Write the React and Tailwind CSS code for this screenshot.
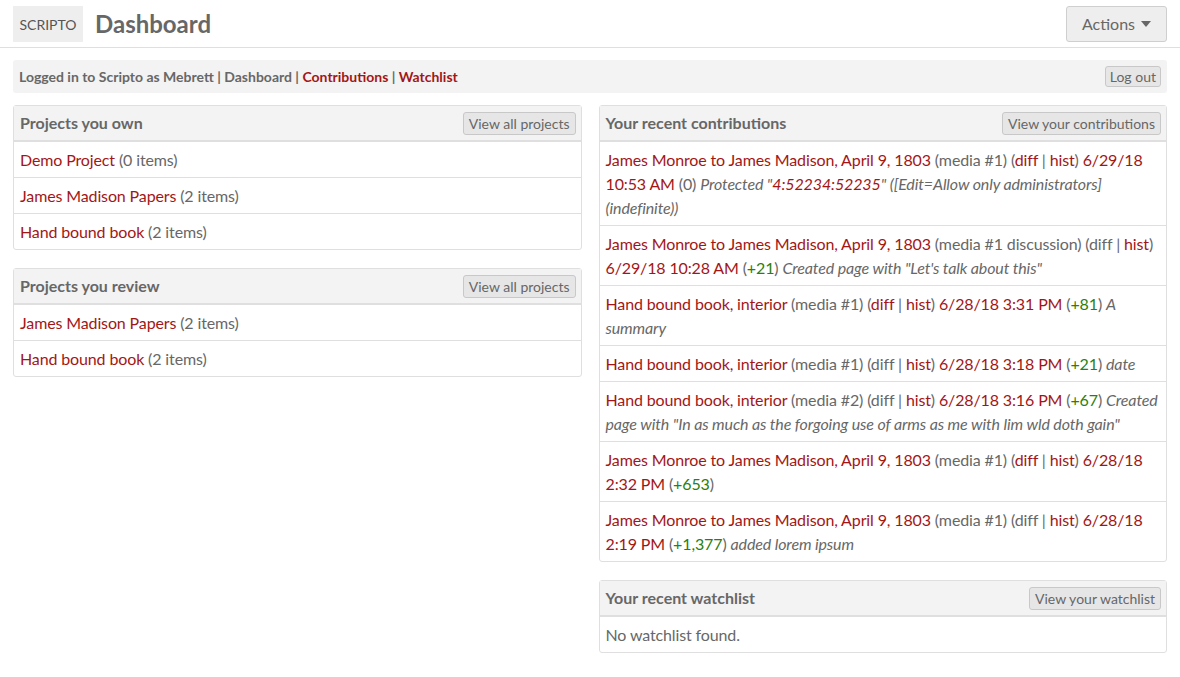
const L = ({ children }) => <a href="#" className="text-[#a31616]">{children}</a>;
const G = ({ children }) => <span className="text-[#2a800a]">{children}</span>;

const Btn = ({ children }) => (
  <button className="h-[23px] px-[5px] text-[14px] leading-[21px] tracking-normal text-[#676767] bg-[#e6e6e6] border border-[#c8c8c8] rounded-[3px]">
    {children}
  </button>
);

const Panel = ({ title, action, children, className = '' }) => (
  <div className={`border border-[#dfdfdf] rounded-[3px] bg-white ${className}`}>
    <div className="h-[35px] flex items-center justify-between pl-[6px] pr-[5px] bg-[#f3f3f3] border-b border-[#dfdfdf]">
      <h3 className="text-[16px] font-bold text-[#676767] tracking-normal">{title}</h3>
      {action && <Btn>{action}</Btn>}
    </div>
    {children}
  </div>
);

const Row = ({ children }) => (
  <div className="px-[6px] pt-[6px] pb-[5px] leading-[24px] border-t border-[#dfdfdf] first:border-t-0 first:pb-[6px]">{children}</div>
);

const Diff = ({ link }) => (
  <>
    (<span className={link ? 'text-[#a31616]' : ''}>diff</span> | <L>hist</L>)
  </>
);

const contributions = [
  <>
    <L>James Monroe to James Madison, April 9, 1803</L> (media #1) <Diff link /> <L>6/29/18 10:53 AM</L> (0){' '}
    <i>Protected "<L>4:52234:52235</L>" ([Edit=Allow only administrators] (indefinite))</i>
  </>,
  <>
    <L>James Monroe to James Madison, April 9, 1803</L> (media #1 discussion) <Diff /> <L>6/29/18 10:28 AM</L> (<G>+21</G>){' '}
    <i>Created page with "Let's talk about this"</i>
  </>,
  <>
    <L>Hand bound book, interior</L> (media #1) <Diff link /> <L>6/28/18 3:31 PM</L> (<G>+81</G>) <i>A summary</i>
  </>,
  <>
    <L>Hand bound book, interior</L> (media #1) <Diff /> <L>6/28/18 3:18 PM</L> (<G>+21</G>) <i>date</i>
  </>,
  <>
    <L>Hand bound book, interior</L> (media #2) <Diff /> <L>6/28/18 3:16 PM</L> (<G>+67</G>){' '}
    <i>Created page with "In as much as the forgoing use of arms as me with lim wld doth gain"</i>
  </>,
  <>
    <L>James Monroe to James Madison, April 9, 1803</L> (media #1) <Diff link /> <L>6/28/18 2:32 PM</L> (<G>+653</G>)
  </>,
  <>
    <L>James Monroe to James Madison, April 9, 1803</L> (media #1) <Diff /> <L>6/28/18 2:19 PM</L> (<G>+1,377</G>){' '}
    <i>added lorem ipsum</i>
  </>,
];

export default function App() {
  return (
    <div className="min-h-[677px] bg-white text-[16px] text-[#676767] tracking-[-0.13px]" style={{ fontFamily: 'Lato, "Open Sans", sans-serif' }}>
      <header className="h-[48px] flex items-start justify-between px-[13px] pt-[6px] border-b border-[#dfdfdf]">
        <div className="flex items-center gap-[12px]">
          <div className="w-[70px] h-[36px] flex items-center justify-center bg-[#eeeeee] text-[14px] text-[#555] tracking-normal">SCRIPTO</div>
          <h1 className="text-[24px] font-bold text-[#676767] leading-[36px] tracking-normal">Dashboard</h1>
        </div>
        <button className="w-[101px] h-[36px] flex items-center justify-center gap-[6px] bg-[#eeeeee] border border-[#cfcfcf] rounded-[3px] text-[16px] text-[#676767] tracking-normal">
          Actions
          <svg width="10" height="6" viewBox="0 0 10 6"><path d="M0 0h10L5 6z" fill="#676767" /></svg>
        </button>
      </header>

      <div className="mx-[13px] mt-[12px] h-[33px] flex items-center justify-between pl-[6px] pr-[6px] bg-[#f3f3f3] rounded-[3px] tracking-normal">
        <div className="text-[14px] font-bold text-[#676767]">
          Logged in to Scripto as Mebrett | Dashboard | <L>Contributions</L> | <L>Watchlist</L>
        </div>
        <button className="h-[21px] px-[4px] text-[14px] leading-[19px] text-[#676767] bg-[#e6e6e6] border border-[#c8c8c8] rounded-[3px]">
          Log out
        </button>
      </div>

      <div className="grid grid-cols-2 gap-[17px] px-[13px] mt-[12px]">
        <div>
          <Panel title="Projects you own" action="View all projects">
            <Row><L>Demo Project</L> (0 items)</Row>
            <Row><L>James Madison Papers</L> (2 items)</Row>
            <Row><L>Hand bound book</L> (2 items)</Row>
          </Panel>
          <Panel title="Projects you review" action="View all projects" className="mt-[18px]">
            <Row><L>James Madison Papers</L> (2 items)</Row>
            <Row><L>Hand bound book</L> (2 items)</Row>
          </Panel>
        </div>
        <div>
          <Panel title="Your recent contributions" action="View your contributions">
            {contributions.map((c, i) => (
              <Row key={i}>{c}</Row>
            ))}
          </Panel>
          <Panel title="Your recent watchlist" action="View your watchlist" className="mt-[18px]">
            <Row>No watchlist found.</Row>
          </Panel>
        </div>
      </div>
    </div>
  );
}
